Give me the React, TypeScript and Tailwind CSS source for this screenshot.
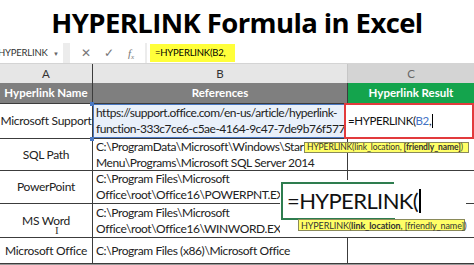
import React from "react";

interface Row {
  name: string;
  lines: string[];
  h: string;
}

const rows: Row[] = [
  {
    name: "Microsoft Support",
    lines: ["https://support.office.com/en-us/article/hyperlink-", "function-333c7ce6-c5ae-4164-9c47-7de9b76f577f"],
    h: "h-[35px]",
  },
  {
    name: "SQL Path",
    lines: ["C:\\ProgramData\\Microsoft\\Windows\\Start", "Menu\\Programs\\Microsoft SQL Server 2014"],
    h: "h-[32px]",
  },
  {
    name: "PowerPoint",
    lines: ["C:\\Program Files\\Microsoft", "Office\\root\\Office16\\POWERPNT.EXE"],
    h: "h-[33px]",
  },
  {
    name: "MS Word",
    lines: ["C:\\Program Files\\Microsoft", "Office\\root\\Office16\\WINWORD.EXE"],
    h: "h-[34px]",
  },
  {
    name: "Microsoft Office",
    lines: ["C:\\Program Files (x86)\\Microsoft Office"],
    h: "h-[26px]",
  },
];

const cellFont = { fontFamily: "Lato, 'Noto Sans', sans-serif" };

export default function App() {
  return (
    <div className="relative w-[474px] h-[265px] overflow-hidden bg-[#9a9a9a]" style={cellFont}>
      {/* titulo */}
      <div className="h-[43px] bg-white flex items-center justify-center pt-[2px]">
        <h1
          className="text-[27.5px] font-bold text-black tracking-[-0.6px] leading-none"
          style={{ fontFamily: "'Open Sans', sans-serif" }}
        >
          HYPERLINK Formula in Excel
        </h1>
      </div>

      {/* barra de formulas */}
      <div className="h-[21px] bg-[#ececec] flex items-stretch text-[9.5px] text-[#333] border-b border-[#d4d4d4]">
        <div className="w-[63px] bg-white flex items-center justify-between pr-[4px] overflow-hidden">
          <span className="-ml-[2px] tracking-[-0.2px]">HYPERLINK</span>
          <span className="text-[6px] text-[#666]">▼</span>
        </div>
        <div className="w-[7px]" />
        <div className="w-[75px] bg-white flex items-center justify-around px-[4px] text-[#777]">
          <span className="text-[12px]">✕</span>
          <span className="text-[12px]">✓</span>
          <span className="italic text-[11px]" style={{ fontFamily: "'Liberation Serif', serif" }}>f<sub className="text-[7px]">x</sub></span>
        </div>
        <div className="w-[2px]" />
        <div className="flex-1 bg-white flex items-center pl-[3px]">
          <span className="bg-[#ffff3a] h-[18px] flex items-center px-[5px] w-[85px] text-black text-[9.5px] tracking-[-0.2px]">=HYPERLINK(B2,</span>
        </div>
      </div>

      {/* encabezados de columna */}
      <div className="grid grid-cols-[93px_255px_126px] h-[19px] bg-[#e6e6e6] text-[11.5px] text-[#333]">
        <div className="flex items-center justify-center border-r border-[#3c3c3c]">A</div>
        <div className="flex items-center justify-center border-r border-[#c6c6c6]">B</div>
        <div className="flex items-center justify-center bg-[#d4d4d4] text-[#666]">C</div>
      </div>

      {/* tabla */}
      <div className="bg-white">
        <div className="grid grid-cols-[93px_255px_126px] h-[21px] text-white font-bold text-[11.5px] border-b border-[#3c3c3c]">
          <div className="bg-[#7f7f7f] flex items-center justify-center border-r border-[#3c3c3c]">Hyperlink Name</div>
          <div className="bg-[#7f7f7f] flex items-center justify-center border-r border-[#3c3c3c]">References</div>
          <div className="bg-[#14a44d] flex items-center justify-center">Hyperlink Result</div>
        </div>
        {rows.map((r, i) => (
          <div key={r.name} className={`grid grid-cols-[93px_255px_126px] ${r.h} border-b border-[#3c3c3c] text-[12px] text-[#222]`}>
            <div className="flex items-center justify-center border-r border-[#3c3c3c] whitespace-nowrap tracking-[-0.3px]">
              {r.name}
            </div>
            <div
              className={`flex flex-col justify-center pl-[3px] border-r border-[#3c3c3c] leading-[16px] whitespace-nowrap overflow-hidden ${
                i === 0
                  ? "tracking-[-0.5px] bg-[#e9f0fa] outline outline-1 outline-[#4a78c2] -outline-offset-1"
                  : "tracking-[-0.4px]"
              }`}
            >
              {r.lines.map((l) => (
                <span key={l}>{l}</span>
              ))}
            </div>
            <div />
          </div>
        ))}
      </div>

      {/* celda en edicion C2 */}
      <div className="absolute left-[344px] top-[103px] w-[130px] h-[36px] border-2 border-[#e23a3c] bg-white flex items-center pl-[2px] text-[11.5px] text-[#111] tracking-[-0.4px]">
        <span>=HYPERLINK(</span>
        <span className="text-[#4472c4]">B2</span>
        <span>,</span>
        <span className="w-[1px] h-[14px] bg-black ml-[1px]" />
      </div>

      {/* tooltip 1 */}
      <div className="absolute left-[304px] top-[142px] h-[11px] w-[165px] bg-[#ffff66] border border-[#8a8a5a] flex items-center pl-[2px] text-[8.5px] leading-none text-[#333] whitespace-nowrap tracking-[-0.1px]">
        HYPERLINK(link_location, <b className="ml-[2px]">[friendly_name]</b>)
      </div>

      {/* selector esquinas B2 */}
      <div className="absolute left-[90px] top-[102px] w-[4px] h-[4px] bg-[#4a78c2]" />
      <div className="absolute left-[90px] top-[137px] w-[4px] h-[4px] bg-[#4a78c2]" />

      {/* cursor de texto en MS Word */}
      <div className="absolute left-[55px] top-[225px] text-[11px] leading-none text-[#333]" style={{ fontFamily: "'Liberation Serif', serif" }}>
        I
      </div>

      {/* zoom de la celda */}
      <div className="absolute left-[280px] top-[180px] w-[186px] h-[57px] bg-white">
        <div className="absolute left-[1px] top-[2px] w-[113px] h-[38px] border-t-2 border-l-2 border-b-2 border-[#2e7d4f]" />
        <div className="absolute left-[111px] top-[38px] w-[4px] h-[4px] bg-[#2e7d4f]" />
        <div className="absolute left-[7px] top-[7px] text-[22px] leading-[28px] text-[#111] whitespace-nowrap flex items-center tracking-[-0.6px]">
          =HYPERLINK(
          <span className="w-[1.5px] h-[24px] bg-black ml-[1px]" />
        </div>
      </div>

      {/* tooltip 2 */}
      <div className="absolute left-[298px] top-[219px] h-[12px] w-[167px] bg-[#ffff66] border border-[#8a8a5a] flex items-center pl-[2px] text-[9px] leading-none text-[#333] whitespace-nowrap tracking-[-0.1px]">
        HYPERLINK(<b>link_location</b>, [friendly_name])
      </div>
    </div>
  );
}
